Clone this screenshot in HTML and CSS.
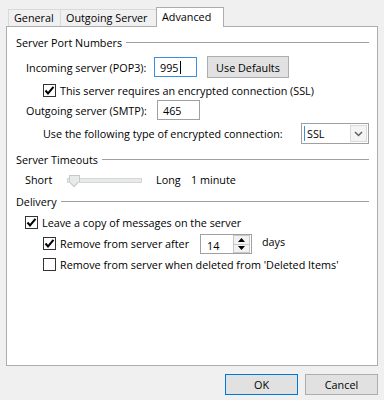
FILE: index.html
```html
<!DOCTYPE html>
<html lang="en">
<head>
    <meta charset="UTF-8">
    <meta name="viewport" content="width=device-width, initial-scale=1.0">
    <title>Advanced</title>
    <link rel="stylesheet" href="styles.css">
</head>
<body>
<div class="dialog">
    <!-- tabs -->
    <div class="tabs">
        <div class="tab tab-general">General</div>
        <div class="tab tab-outgoing">Outgoing Server</div>
        <div class="tab tab-active">Advanced</div>
    </div>

    <div class="panel">
        <!-- server port numbers -->
        <div class="group-title row-h1"><span>Server Port Numbers</span><div class="rule"></div></div>

        <div class="row row-incoming indent1">
            <span class="label label-incoming">Incoming server (POP3):</span>
            <div class="textbox focused">995<span class="caret"></span></div>
            <div class="button btn-defaults">Use Defaults</div>
        </div>

        <div class="row row-ssl indent2">
            <span class="check checked"><svg width="11" height="11" viewBox="0 0 11 11"><path d="M1.5 5.5 L4 8.5 L9.5 1.8" fill="none" stroke="#000" stroke-width="2"/></svg></span>
            <span class="check-label">This server requires an encrypted connection (SSL)</span>
        </div>

        <div class="row row-outgoing indent1">
            <span class="label label-outgoing">Outgoing server (SMTP):</span>
            <div class="textbox">465</div>
        </div>

        <div class="row row-encrypt indent2b">
            <span class="label label-encrypt">Use the following type of encrypted connection:</span>
            <div class="select">
                <span class="select-caret"></span>
                <span class="select-value">SSL</span>
                <span class="select-btn"><svg width="9" height="6" viewBox="0 0 9 6"><path d="M1 1 L4.5 4.5 L8 1" fill="none" stroke="#606060" stroke-width="1.5"/></svg></span>
            </div>
        </div>

        <!-- server timeouts -->
        <div class="group-title row-h2"><span>Server Timeouts</span><div class="rule"></div></div>

        <div class="row row-timeout indent1b">
            <span class="label label-short">Short</span>
            <div class="slider">
                <div class="track"></div>
                <div class="thumb"></div>
            </div>
            <span class="label label-long">Long</span>
            <span class="label">1 minute</span>
        </div>

        <!-- delivery -->
        <div class="group-title row-h3"><span>Delivery</span><div class="rule"></div></div>

        <div class="row row-leave indent1b">
            <span class="check checked"><svg width="11" height="11" viewBox="0 0 11 11"><path d="M1.5 5.5 L4 8.5 L9.5 1.8" fill="none" stroke="#000" stroke-width="2"/></svg></span>
            <span class="check-label">Leave a copy of messages on the server</span>
        </div>

        <div class="row row-remove indent2">
            <span class="check checked"><svg width="11" height="11" viewBox="0 0 11 11"><path d="M1.5 5.5 L4 8.5 L9.5 1.8" fill="none" stroke="#000" stroke-width="2"/></svg></span>
            <span class="check-label label-remove">Remove from server after</span>
            <div class="spinner">
                <span class="spin-value">14</span>
                <div class="spin-btns">
                    <div class="spin-btn"><svg width="7" height="4" viewBox="0 0 7 4"><path d="M0 4 L3.5 0 L7 4 Z" fill="#000"/></svg></div>
                    <div class="spin-btn"><svg width="7" height="4" viewBox="0 0 7 4"><path d="M0 0 L3.5 4 L7 0 Z" fill="#000"/></svg></div>
                </div>
            </div>
            <span class="label label-days">days</span>
        </div>

        <div class="row row-deleted indent2">
            <span class="check"></span>
            <span class="check-label">Remove from server when deleted from 'Deleted Items'</span>
        </div>
    </div>

    <!-- dialog buttons -->
    <div class="footer">
        <div class="button btn-ok">OK</div>
        <div class="button btn-cancel">Cancel</div>
    </div>
</div>
</body>
</html>
```

FILE: styles.css
```css
/* dialog styles */

body {
    margin: 0;
    background-color: #f0f0f0;
    font-family: 'Open Sans', 'Noto Sans', sans-serif;
    font-size: 10.8px;
    color: #000;
}
.dialog {
    padding: 0 6px 0 6px;
    width: 372px;
}

/* tabs */
.tabs {
    display: flex;
    align-items: flex-end;
    height: 20px;
    padding: 6px 0 0 2px;
}
.tab {
    height: 16px;
    line-height: 15px;
    padding: 0 5px;
    border: 1px solid #d9d9d9;
    border-bottom: none;
    background-color: #f0f0f0;
    white-space: nowrap;
}
.tab-general {
    width: 41px;
}
.tab-outgoing {
    width: 86px;
    border-left: none;
}
.tab-active {
    position: relative;
    top: 1px;
    height: 19px;
    width: 56px;
    margin-left: -2px;
    background-color: #fff;
    border-color: #adadad;
    line-height: 18px;
    z-index: 1;
}

.panel {
    height: 331px;
    border: 1px solid #adadad;
    background-color: #fff;
    padding: 7px 8px 0 9px;
}

/* rows */
.row {
    display: flex;
    align-items: center;
    white-space: nowrap;
}
.group-title {
    display: flex;
    align-items: center;
    height: 16px;
}
.group-title .rule {
    flex: 1;
    height: 1px;
    margin-left: 4px;
    background-color: #a0a0a0;
}
.indent1 { padding-left: 10px; }
.indent1b { padding-left: 9px; }
.indent2 { padding-left: 27px; }
.indent2b { padding-left: 27px; }

.row-incoming { margin-top: 6px; height: 22px; }
.row-ssl { margin-top: 4px; height: 16px; }
.row-outgoing { margin-top: 2px; height: 20px; }
.row-encrypt { margin-top: 3px; height: 21px; }
.row-h2 { margin-top: 7px; }
.row-timeout { margin-top: 4px; height: 16px; }
.row-h3 { margin-top: 6px; }
.row-leave { margin-top: 5px; height: 16px; }
.row-remove { margin-top: 3px; height: 20px; }
.row-deleted { margin-top: 3px; height: 16px; }

.label-incoming { width: 128px; }
.label-outgoing { width: 131px; }
.label-encrypt { width: 258px; }
.label-short { width: 42px; }
.label-long { width: 35px; }
.label-remove { width: 140px; }
.label-days { margin-left: 10px; margin-top: -3px; }

/* text boxes */
.textbox {
    display: flex;
    align-items: center;
    width: 41px;
    height: 18px;
    padding-left: 0;
    border: 1px solid #a0a0a0;
    text-indent: 5px;
}
.textbox.focused {
    height: 18px;
    border-color: #3c8ee0;
}
.caret {
    display: inline-block;
    width: 1px;
    height: 13px;
    background-color: #000;
    margin-left: 1px;
}

.button {
    display: flex;
    align-items: center;
    justify-content: center;
    background-color: #e1e1e1;
    border: 1px solid #adadad;
}
.btn-defaults {
    width: 80px;
    height: 20px;
    margin-left: 10px;
}

/* check boxes */
.check {
    display: inline-flex;
    align-items: center;
    justify-content: center;
    width: 11px;
    height: 11px;
    border: 1px solid #333;
    background-color: #fff;
    margin-right: 4px;
}

/* drop down */
.select {
    display: flex;
    align-items: center;
    width: 66px;
    height: 19px;
    border: 1px solid #a0a0a0;
}
.select-caret {
    width: 1px;
    height: 15px;
    background-color: #3c8ee0;
    margin-left: 2px;
}
.select-value {
    flex: 1;
    padding-left: 2px;
}
.select-btn {
    display: flex;
    align-items: center;
    justify-content: center;
    width: 15px;
    height: 15px;
    margin-right: 1px;
    border: 1px solid #dadada;
    background-color: #f4f4f4;
}

/* slider */
.slider {
    position: relative;
    width: 75px;
    height: 12px;
    margin: 0 14px 0 0;
}
.track {
    margin-top: 5px;
    height: 3px;
    border: 1px solid #d6d6d6;
    background-color: #e7eaea;
}
.thumb {
    position: absolute;
    left: 2px;
    top: 2px;
    width: 9px;
    height: 6px;
    background-color: #e7eaea;
    border: 1px solid #c8c8c8;
    border-bottom: none;
}
.thumb::after {
    content: "";
    position: absolute;
    left: 1px;
    top: 4px;
    width: 5px;
    height: 5px;
    border-right: 1px solid #c8c8c8;
    border-bottom: 1px solid #c8c8c8;
    background-color: #e7eaea;
    transform: rotate(45deg);
}

/* spinner */
.spinner {
    display: flex;
    align-items: center;
    width: 50px;
    height: 18px;
    border: 1px solid #a0a0a0;
    margin-top: 2px;
}
.spin-value {
    flex: 1;
    padding-left: 6px;
    padding-top: 2px;
}
.spin-btns {
    display: flex;
    flex-direction: column;
    width: 15px;
    height: 16px;
    margin-right: 1px;
    border: 1px solid #c8c8c8;
}
.spin-btn {
    flex: 1;
    display: flex;
    align-items: center;
    justify-content: center;
    background-color: #f2f2f2;
}
.spin-btn + .spin-btn {
    border-top: 1px solid #c8c8c8;
}

/* footer */
.footer {
    display: flex;
    justify-content: flex-end;
    gap: 7px;
    margin-top: 8px;
}
.btn-ok,
.btn-cancel {
    width: 71px;
    height: 19px;
}
.btn-ok {
    border-color: #0078d7;
}
```
